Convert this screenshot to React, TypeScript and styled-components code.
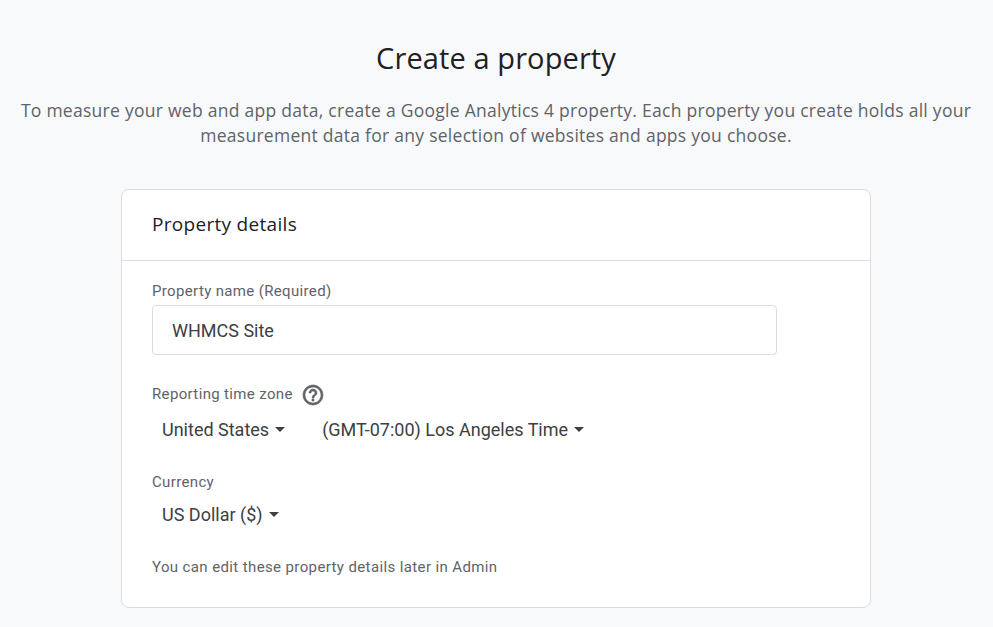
import React from "react";
import styled, { createGlobalStyle } from "styled-components";

const Global = createGlobalStyle`
  html, body { margin: 0; padding: 0; background: #f8f9fa; }
  body { font-family: Roboto, "Liberation Sans", sans-serif; overflow: hidden; }
`;

const Page = styled.main`
  width: 992px;
  height: 627px;
  overflow: hidden;
  display: flex;
  flex-direction: column;
  align-items: center;
  background: #f8f9fa;
`;

const Title = styled.h1`
  margin: 37px 0 0;
  font-family: "Open Sans", sans-serif;
  font-size: 29px;
  line-height: 42px;
  font-weight: 400;
  color: #202124;
  letter-spacing: 0.1px;
`;

const Subtitle = styled.p`
  margin: 19px 0 0;
  width: 970px;
  text-align: center;
  font-family: "Open Sans", sans-serif;
  font-size: 17.5px;
  line-height: 25px;
  font-weight: 500;
  letter-spacing: 0.27px;
  color: #5f6368;
`;

const Card = styled.section`
  box-sizing: border-box;
  width: 750px;
  height: 419px;
  margin-top: 41px;
  background: #fff;
  border: 1px solid #dadce0;
  border-radius: 8px;
  flex-shrink: 0;
`;

const CardHeader = styled.header`
  box-sizing: border-box;
  height: 71px;
  padding: 0 30px 2px;
  display: flex;
  align-items: center;
  border-bottom: 1px solid #dadce0;
  font-family: "Open Sans", sans-serif;
  font-size: 19px;
  letter-spacing: 0.3px;
  color: #202124;
`;

const CardBody = styled.div`
  padding: 20px 30px 0;
`;

const Label = styled.label`
  display: flex;
  align-items: center;
  height: 20px;
  font-size: 15px;
  letter-spacing: 0.35px;
  color: #5f6368;
`;

const TextField = styled.input`
  display: block;
  box-sizing: border-box;
  width: 625px;
  height: 50px;
  margin: 4px 0 0;
  padding: 0 19px;
  background: #fff;
  border: 1px solid #dadce0;
  border-radius: 4px;
  font-family: inherit;
  font-size: 18px;
  color: #3c4043;
  outline: none;
`;

const Field = styled.div<{ $top: number }>`
  margin-top: ${(p) => p.$top}px;
`;

const HelpIcon = styled.svg`
  width: 24px;
  height: 24px;
  margin: 2px 0 0 8px;
  fill: #5f6368;
  stroke: #5f6368;
  stroke-width: 0.6;
`;

const Selects = styled.div<{ $top: number }>`
  display: flex;
  gap: 27px;
  margin-top: ${(p) => p.$top}px;
`;

const Select = styled.div`
  display: flex;
  align-items: center;
  height: 32px;
  padding-left: 10px;
  font-size: 18px;
  color: #3c4043;
`;

const Caret = styled.span`
  width: 0;
  height: 0;
  margin-left: 6px;
  border-left: 5px solid transparent;
  border-right: 5px solid transparent;
  border-top: 5px solid #3c4043;
`;

const Note = styled.p`
  margin: 27px 0 0;
  font-size: 15px;
  line-height: 20px;
  letter-spacing: 0.38px;
  color: #5f6368;
`;

const Dropdown = ({ children }: { children: string }) => (
  <Select>
    {children}
    <Caret />
  </Select>
);

export default function App() {
  return (
    <Page>
      <Global />
      <Title>Create a property</Title>
      <Subtitle>
        To measure your web and app data, create a Google Analytics 4 property. Each property you create holds all your
        measurement data for any selection of websites and apps you choose.
      </Subtitle>
      <Card>
        <CardHeader>Property details</CardHeader>
        <CardBody>
          <Label>Property name (Required)</Label>
          <TextField defaultValue="WHMCS Site" />
          <Field $top={29}>
            <Label>
              Reporting time zone
              <HelpIcon viewBox="0 0 24 24">
                <path d="M11 18h2v-2h-2v2zm1-16C6.48 2 2 6.48 2 12s4.48 10 10 10 10-4.48 10-10S17.52 2 12 2zm0 18c-4.41 0-8-3.59-8-8s3.59-8 8-8 8 3.59 8 8-3.59 8-8 8zm0-14c-2.21 0-4 1.79-4 4h2c0-1.1.9-2 2-2s2 .9 2 2c0 2-3 1.75-3 5h2c0-2.25 3-2.5 3-5 0-2.21-1.79-4-4-4z" />
              </HelpIcon>
            </Label>
            <Selects $top={9}>
              <Dropdown>United States</Dropdown>
              <Dropdown>(GMT-07:00) Los Angeles Time</Dropdown>
            </Selects>
          </Field>
          <Field $top={27}>
            <Label>Currency</Label>
            <Selects $top={6}>
              <Dropdown>US Dollar ($)</Dropdown>
            </Selects>
          </Field>
          <Note>You can edit these property details later in Admin</Note>
        </CardBody>
      </Card>
    </Page>
  );
}
